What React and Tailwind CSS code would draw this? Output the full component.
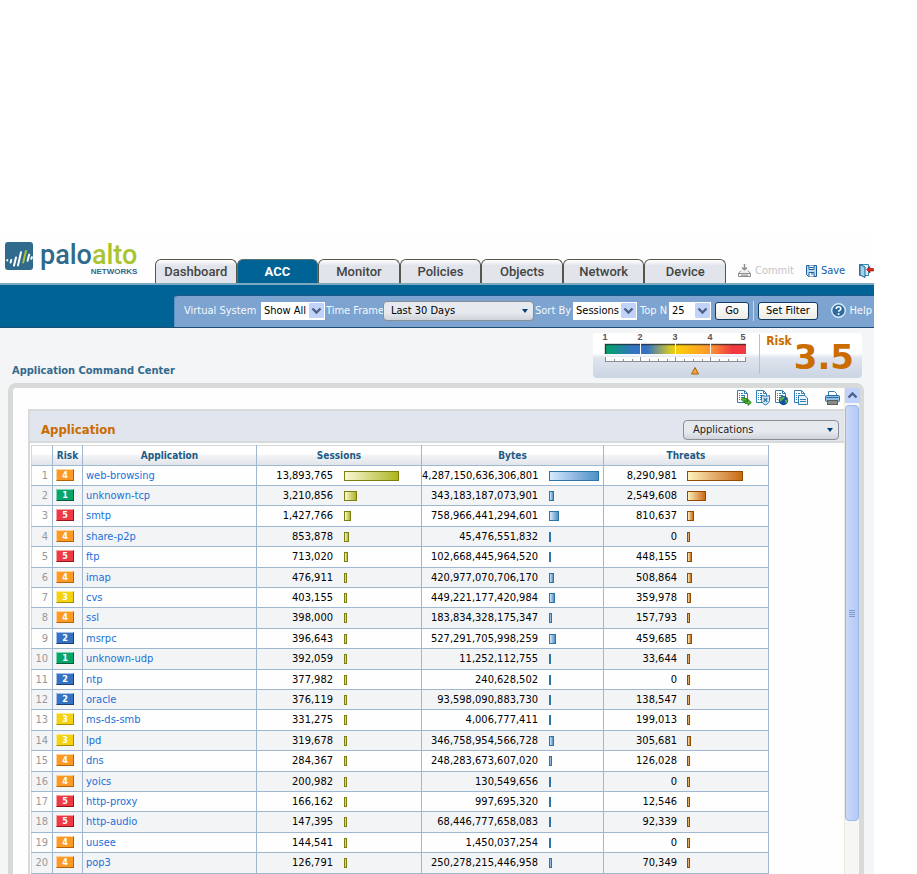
import React, { useState } from 'react';

const TABS = ['Dashboard', 'ACC', 'Monitor', 'Policies', 'Objects', 'Network', 'Device'];

// [risk, name, sessions, bar, bytes, bar, threats, bar]
const ROWS = [
  [4, 'web-browsing', '13,893,765', 55, '4,287,150,636,306,801', 50, '8,290,981', 56],
  [1, 'unknown-tcp', '3,210,856', 13, '343,183,187,073,901', 5, '2,549,608', 19],
  [5, 'smtp', '1,427,766', 7, '758,966,441,294,601', 10, '810,637', 7],
  [4, 'share-p2p', '853,878', 5, '45,476,551,832', 2, '0', 3],
  [5, 'ftp', '713,020', 4, '102,668,445,964,520', 2, '448,155', 5],
  [4, 'imap', '476,911', 3, '420,977,070,706,170', 5, '508,864', 5],
  [3, 'cvs', '403,155', 3, '449,221,177,420,984', 6, '359,978', 4],
  [4, 'ssl', '398,000', 3, '183,834,328,175,347', 3, '157,793', 3],
  [2, 'msrpc', '396,643', 3, '527,291,705,998,259', 7, '459,685', 5],
  [1, 'unknown-udp', '392,059', 3, '11,252,112,755', 2, '33,644', 3],
  [2, 'ntp', '377,982', 3, '240,628,502', 2, '0', 3],
  [2, 'oracle', '376,119', 3, '93,598,090,883,730', 2, '138,547', 3],
  [3, 'ms-ds-smb', '331,275', 3, '4,006,777,411', 2, '199,013', 3],
  [3, 'lpd', '319,678', 3, '346,758,954,566,728', 5, '305,681', 4],
  [4, 'dns', '284,367', 3, '248,283,673,607,020', 3, '126,028', 3],
  [4, 'yoics', '200,982', 3, '130,549,656', 2, '0', 3],
  [5, 'http-proxy', '166,162', 3, '997,695,320', 2, '12,546', 3],
  [5, 'http-audio', '147,395', 3, '68,446,777,658,083', 2, '92,339', 3],
  [4, 'uusee', '144,541', 3, '1,450,037,254', 2, '0', 3],
  [4, 'pop3', '126,791', 3, '250,278,215,446,958', 3, '70,349', 3],
];

const RISK_STYLES = {
  1: 'bg-[#08a56b] border-t-[#7fd6b4] border-l-[#7fd6b4] border-b-[#045c3c] border-r-[#045c3c]',
  2: 'bg-[#3672c4] border-t-[#a3c0ea] border-l-[#a3c0ea] border-b-[#1b3f78] border-r-[#1b3f78]',
  3: 'bg-[#f5d20e] border-t-[#fbeb94] border-l-[#fbeb94] border-b-[#a58c05] border-r-[#a58c05]',
  4: 'bg-[#fd9a26] border-t-[#fed29c] border-l-[#fed29c] border-b-[#b36408] border-r-[#b36408]',
  5: 'bg-[#ee3a43] border-t-[#f8a3a7] border-l-[#f8a3a7] border-b-[#98141c] border-r-[#98141c]',
};

const BAR_STYLES = {
  sessions: 'border-[#7d8010] from-[#fbf6d0] via-[#d3d77c] to-[#adb500]',
  bytes: 'border-[#2d75a6] from-[#d5ebfd] via-[#93b9e2] to-[#4a92c4]',
  threats: 'border-[#8f4c02] from-[#fbf3bd] via-[#e3ab6c] to-[#c96a00]',
};

const Logo = () => (
  <div className="flex h-8 items-start gap-[7px]">
    <svg width="28" height="28" viewBox="0 0 28 28" className="shrink-0" aria-hidden="true">
      <rect width="28" height="28" rx="3" fill="#306a8c" />
      <g stroke="#fff" strokeWidth="2" strokeLinecap="round">
        <path d="M2.2 18.4l.1-.3M5.6 20.6l.7-2.6M9 23.6l2-8.2M13 23.4l3-13.2" />
        <path d="M18.2 20.5l2.8-11.6" stroke="#a9c42f" />
        <path d="M22.6 18.8l1.6-6.2M26.4 16.8l.4-1.6" />
      </g>
    </svg>
    <div className="flex flex-col items-end">
      <span className="font-['Roboto',sans-serif] text-[27px] leading-[26px] font-medium text-[#306a8c]">
        palo<span className="text-[#a9c42f]">alto</span>
      </span>
      <span className="font-['Liberation_Sans',sans-serif] text-[8px] leading-[8px] font-bold text-[#306a8c]">NETWORKS</span>
    </div>
  </div>
);

const Chevron = ({ up }) => (
  <svg width="15" height="15" viewBox="0 0 15 15" aria-hidden="true">
    <rect width="15" height="15" rx="1" fill="#c2d3fb" />
    <path d={up ? 'M3.5 9.5l4-4 4 4' : 'M3.5 5.5l4 4 4-4'} fill="none" stroke="#4d6185" strokeWidth="2.4" />
  </svg>
);

const XpSelect = ({ id, options, className }) => (
  <span className={`relative flex h-[18px] bg-white ${className}`}>
    <select id={id} className="w-full appearance-none bg-transparent pl-[3px] text-black outline-none">
      {options.map((option) => (
        <option key={option}>{option}</option>
      ))}
    </select>
    <span className="pointer-events-none absolute top-px right-px">
      <Chevron />
    </span>
  </span>
);

const FlatSelect = ({ label, id, options, className }) => (
  <span
    className={`relative flex h-5 rounded-sm border border-[#8a8f96] bg-gradient-to-b from-[#e6e9ee] from-60% to-[#d0d4da] ${className}`}
  >
    <select id={id} aria-label={label} className="w-full appearance-none bg-transparent outline-none">
      {options.map((option) => (
        <option key={option}>{option}</option>
      ))}
    </select>
    <svg width="6" height="4" viewBox="0 0 6 4" className="pointer-events-none absolute top-[7px] right-[5px]">
      <path d="M0 0h6L3 4z" fill="#003f73" />
    </svg>
  </span>
);

const XpButton = ({ children, className }) => (
  <button
    type="button"
    className={`h-[18px] rounded-[3px] border border-[#123c66] bg-gradient-to-b from-white to-[#ecebe4] leading-4 text-black ${className}`}
  >
    {children}
  </button>
);

const Sheet = () => (
  <>
    <path d="M1.5.5h7l3 3v9h-10z" fill="#fff" stroke="#2f7fb5" />
    <path d="M8.5.5v3h3" fill="none" stroke="#2f7fb5" />
    <path d="M3 3.5h1m1 0h2M3 5.5h1m1 0h4M3 7.5h1m1 0h4M3 9.5h1m1 0h3" stroke="#2f7fb5" />
  </>
);

const ToolButton = ({ label, children }) => (
  <button type="button" aria-label={label} className="h-4 w-4">
    <svg width="16" height="16" viewBox="0 0 16 16">{children}</svg>
  </button>
);

const Toolbar = () => (
  <div className="flex h-[21px] items-center justify-end pr-1 pb-0.5">
    <div className="flex gap-[3px]">
      <ToolButton label="Export traffic">
        <Sheet />
        <path d="M5 9.500l3.500-3v2h2.500v2H8.500v2z" fill="#52b82c" stroke="#1c7a17" strokeWidth=".8" />
        <path d="M15.300 12.500l-3.300-3v2H9v2h3v2z" fill="#52b82c" stroke="#1c7a17" strokeWidth=".8" />
      </ToolButton>
      <ToolButton label="Threat log">
        <Sheet />
        <path d="M6.500 5.500l4 .8 4-.8v5c0 2-2 3.500-4 4.500-2-1-4-2.500-4-4.500z" fill="#d4e7f6" stroke="#3177a8" />
        <path d="M8.700 8.200l3.600 3.600m0-3.600l-3.600 3.600" stroke="#3177a8" strokeWidth="1.300" />
      </ToolButton>
      <ToolButton label="URL log">
        <Sheet />
        <circle cx="9.500" cy="10.500" r="4.700" fill="#174f9c" />
        <path d="M6 8.500c2-2 4-2 5-1.500l-1 2-2 1-1 2c-1-.5-1.500-2-1-3.500zM11 10l2.500-.5c.4 1.500-.5 3.500-2 4z" fill="#5cb544" />
      </ToolButton>
      <ToolButton label="Data log">
        <Sheet />
        <path d="M5.500 5.500h6l3 2.500v6.500h-9z" fill="#e9f4fc" stroke="#2f7fb5" />
        <path d="M7 9.500h6M7 11.500h6" stroke="#2f7fb5" />
      </ToolButton>
    </div>
    <button type="button" aria-label="Print" className="ml-4">
      <svg width="15" height="15" viewBox="0 0 15 15">
        <path d="M3.500 5.500v-4h6l2 2v2" fill="#fff" stroke="#2f7fb5" />
        <rect x=".5" y="5.500" width="14" height="6" rx="1" fill="#8fbfe2" stroke="#2a6b9c" />
        <path d="M1.500 7.500h12" stroke="#2a6b9c" />
        <rect x="2.500" y="10.500" width="10" height="4" fill="#8b8b88" stroke="#5c5c5a" />
      </svg>
    </button>
  </div>
);

const RiskGauge = () => (
  <div className="mr-3 flex h-[45px] rounded bg-gradient-to-b from-white from-45% via-[#e0e5ee] via-55% to-[#cbd4e3] pl-2">
    <svg width="150" height="45" viewBox="0 0 150 45" role="img" aria-label="Risk 3.5 of 5">
      <defs>
        <linearGradient id="risk-ramp">
          <stop offset="0" stopColor="#00a566" />
          <stop offset=".2" stopColor="#3573c2" />
          <stop offset=".3" stopColor="#3573c2" />
          <stop offset=".46" stopColor="#d2c62a" />
          <stop offset=".52" stopColor="#fbcd08" />
          <stop offset=".75" stopColor="#fd9430" />
          <stop offset=".9" stopColor="#f03a40" />
          <stop offset="1" stopColor="#f03a40" />
        </linearGradient>
      </defs>
      <g fontFamily="Liberation Sans, sans-serif" fontSize="9" fontWeight="bold" fill="#555" textAnchor="middle">
        <text x="4" y="7">1</text>
        <text x="39" y="7">2</text>
        <text x="74" y="7">3</text>
        <text x="109" y="7">4</text>
        <text x="142" y="7">5</text>
      </g>
      <rect x="4" y="11" width="141" height="10" fill="url(#risk-ramp)" />
      <path d="M4.500 21v-9.500H145" fill="none" stroke="#222" strokeWidth="1.500" strokeOpacity=".7" />
      <path d="M39.500 10v12M74.500 10v12M109.500 10v12" stroke="#fff" />
      <path d="M4 26h141" stroke="#fff" strokeWidth="4" />
      <path
        d="M4.500 24v4M13.500 26v2M22.500 26v2M31.500 26v2M39.500 24v4M48.500 26v2M57.500 26v2M66.500 26v2M74.500 24v4M83.500 26v2M92.500 26v2M101.500 26v2M109.500 24v4M118.500 26v2M127.500 26v2M136.500 26v2M144.500 24v4M4 28.500h141"
        stroke="#8b8f94"
      />
      <path d="M94 34.500l3.500 6.500h-7z" fill="#f8a52c" stroke="#a85f10" />
    </svg>
    <div className="ml-2 mt-px flex h-10 items-start gap-0.5 border-l border-[#a9c4dc] pr-2 pl-1.5 font-bold text-[#ca6c00]">
      <span className="text-[12px] leading-[14px]">Risk</span>
      <span className="mt-[7px] font-['DejaVu_Sans',sans-serif] text-[34px] leading-8">3.5</span>
    </div>
  </div>
);

const Bar = ({ kind, width }) => (
  <span className={`block h-[10px] border bg-gradient-to-r ${BAR_STYLES[kind]}`} style={{ width }} />
);

const MeterCell = ({ value, kind, width, barArea }) => (
  <td className="border border-[#a0b8cf] p-0">
    <div className="flex items-center">
      <span className="flex-1 text-right whitespace-nowrap text-black">{value}</span>
      <span className={`shrink-0 ${barArea}`}>
        <Bar kind={kind} width={width} />
      </span>
    </div>
  </td>
);

const AppTable = () => (
  <table className="ml-px mt-0.5 w-[737px] table-fixed border-collapse border border-[#a0b8cf] text-[11px] leading-[14px]">
    <colgroup>
      <col className="w-[21px]" />
      <col className="w-[30px]" />
      <col className="w-[174px]" />
      <col className="w-[165px]" />
      <col className="w-[182px]" />
      <col className="w-[165px]" />
    </colgroup>
    <thead>
      <tr className="h-5 bg-gradient-to-b from-white from-40% via-[#f1f2f4] via-50% to-[#dfe4ea] text-[10px] text-[#1d5a85]">
        {['', 'Risk', 'Application', 'Sessions', 'Bytes', 'Threats'].map((title) => (
          <th
            key={title}
            className="border border-[#a0b8cf] border-t-[#d6d8da] p-0 text-center font-bold first:border-l-[#d6d8da]"
          >
            {title}
          </th>
        ))}
      </tr>
    </thead>
    <tbody>
      {ROWS.map(([risk, name, sessions, sBar, bytes, bBar, threats, tBar], index) => (
        <tr key={name} className="h-5 even:bg-[#f3f4f6] nth-[5n]:h-[21px] nth-[5n+3]:h-[21px]">
          <td className="border border-[#a0b8cf] border-l-[#d6d8da] p-0 pr-1 text-right text-[#999]">{index + 1}</td>
          <td className="border border-[#a0b8cf] p-0 pb-0.5 pl-[3px]">
            <span
              className={`block h-3 w-[18px] border text-center text-[9px] leading-[10px] font-bold text-white ${RISK_STYLES[risk]}`}
            >
              {risk}
            </span>
          </td>
          <td className="border border-[#a0b8cf] p-0 pl-[3px]">
            <a href="#" className="text-[#1a70d8]">{name}</a>
          </td>
          <MeterCell value={sessions} kind="sessions" width={sBar} barArea="w-[77px] ml-[11px]" />
          <MeterCell value={bytes} kind="bytes" width={bBar} barArea="w-[54px] ml-[11px]" />
          <MeterCell value={threats} kind="threats" width={tBar} barArea="w-[81px] ml-[10px]" />
        </tr>
      ))}
    </tbody>
  </table>
);

const App = () => {
  const [active, setActive] = useState('ACC');

  return (
    <div className="flex h-screen flex-col overflow-hidden bg-white pt-[233px] pr-[43px] font-['DejaVu_Sans_Condensed','DejaVu_Sans',sans-serif] text-[11px] leading-[14px]">
      <header className="flex shrink-0 items-end bg-[#fefefe]">
        <div className="w-[155px] shrink-0 self-start pt-[9px] pl-[5px]">
          <Logo />
        </div>
        <nav className="flex w-[571px] shrink-0 items-end pt-[26px]">
          {TABS.map((tab) => (
            <button
              key={tab}
              type="button"
              onClick={() => setActive(tab)}
              className={
                tab === active
                  ? "h-6 flex-1 rounded-t-md border border-b-0 border-[#58706f] bg-[#006396] font-['Roboto',sans-serif] text-[13px] font-bold text-white"
                  : "h-6 flex-1 rounded-t-md border border-b-0 border-[#55564a] bg-gradient-to-b from-white to-[#e1e5eb] to-25% font-['Roboto',sans-serif] text-[13px] font-medium text-[#444]"
              }
            >
              {tab}
            </button>
          ))}
        </nav>
        <div className="flex h-6 min-w-0 flex-1 items-center pb-px pl-3">
          <button type="button" disabled className="flex items-center gap-1 text-[#c4c4c4]">
            <svg width="13" height="14" viewBox="0 0 13 14">
              <path d="M6.500 0v5M4 3.500l2.500 2.500L9 3.500" fill="none" stroke="#8d8d8d" strokeWidth="1.500" />
              <path d="M3 6.500L.5 9.500v3h12v-3L10 6.500" fill="#eee" stroke="#8d8d8d" />
              <path d="M.5 9.500h12M3 11.200h7" stroke="#8d8d8d" />
            </svg>
            Commit
          </button>
          <button type="button" className="ml-3 flex items-center gap-1 text-[#0d5cb0]">
            <svg width="11" height="12" viewBox="0 0 11 12">
              <path d="M.5.5h10v11h-8l-2-2z" fill="#b9dcf3" stroke="#1d5f9c" />
              <path d="M3 .5v4h5v-4M3 11.500v-4h5v4M3.500 2.500h4M5 9h2" fill="#fff" stroke="#1d5f9c" />
            </svg>
            Save
          </button>
          <button type="button" aria-label="Log out" className="ml-auto">
            <svg width="15" height="15" viewBox="0 0 15 15">
              <path d="M.5 1.500h9v11h-9z" fill="#d9effa" stroke="#2c87b5" />
              <path d="M1 1.500l5 2.500v10.500l-5-2.500z" fill="#9fd3ec" stroke="#1e5f8a" />
              <path d="M7.500 6.500l3.500-3v2h3.500v2.500H11v2z" fill="#e0261b" stroke="#8d0d08" strokeWidth=".6" />
            </svg>
          </button>
        </div>
      </header>

      <div className="shrink-0 border-t-2 border-t-[#7ba9bf] border-b border-b-[#1c4e74] bg-[#006396] pt-[10px] pl-[174px]">
        <div className="flex h-8 items-center rounded-tl border-t border-l border-t-[#1c5a8c] border-l-[#5f92c2] bg-[#7da4d0] pb-0.5 pl-[9px] whitespace-nowrap text-[#f4f8fc]">
          <label htmlFor="vsys" className="w-[77px] shrink-0">Virtual System</label>
          <XpSelect id="vsys" options={['Show All']} className="w-16 shrink-0" />
          <label htmlFor="frame" className="w-[58px] shrink-0 pl-px">Time Frame</label>
          <FlatSelect id="frame" options={['Last 30 Days']} className="w-[151px] shrink-0 pl-[7px] text-black" />
          <label htmlFor="sort" className="w-[39px] shrink-0 pl-px">Sort By</label>
          <XpSelect id="sort" options={['Sessions']} className="w-16 shrink-0" />
          <label htmlFor="top" className="w-8 shrink-0 pl-[3px]">Top N</label>
          <XpSelect id="top" options={['25']} className="w-[42px] shrink-0" />
          <XpButton className="ml-1 w-[34px] shrink-0">Go</XpButton>
          <span className="ml-1 h-5 w-px bg-[#c5d7eb]" />
          <XpButton className="ml-1 w-[60px] shrink-0">Set Filter</XpButton>
          <a href="#" className="ml-auto flex items-center gap-[3px] pr-0.5">
            <svg width="15" height="15" viewBox="0 0 15 15" aria-hidden="true">
              <circle cx="7.500" cy="7.500" r="6.800" fill="#2c6c9f" stroke="#dcebf7" strokeWidth="1.400" />
              <path d="M5.200 6c0-3 4.600-3 4.600-.3 0 1.600-2.200 1.600-2.200 3.100" fill="none" stroke="#fff" strokeWidth="1.600" />
              <circle cx="7.600" cy="11" r="1" fill="#fff" />
            </svg>
            Help
          </a>
        </div>
      </div>

      <main className="flex min-h-0 flex-1 flex-col bg-[#f4f5f7] pt-[5px]">
        <div className="flex shrink-0 items-end justify-between">
          <h1 className="pl-3 text-[11px] font-bold text-[#33698c]">Application Command Center</h1>
          <RiskGauge />
        </div>

        <div className="mt-[5px] mr-[10px] ml-2 flex min-h-0 flex-1 rounded-t-lg border-5 border-b-0 border-[#d8dad9] bg-[#fefefe]">
          <section className="min-w-0 flex-1 overflow-hidden">
            <Toolbar />
            <div className="ml-[15px] border-t-2 border-l-2 border-[#d8dad9]">
              <div className="flex h-8 items-center justify-between border-b-2 border-[#d8dad9] bg-[#e1e5ed] pr-[5px] pl-[11px]">
                <h2 className="pt-2 text-[13px] leading-4 font-bold text-[#ca6c00]">Application</h2>
                <span className="pt-2">
                  <FlatSelect
                    id="view"
                    label="Application view"
                    options={['Applications']}
                    className="w-[156px] pl-[9px] text-[#222]"
                  />
                </span>
              </div>
              <AppTable />
            </div>
          </section>

          <aside className="flex w-[15px] shrink-0 flex-col border-l border-[#eceada] bg-[#f6f6f4]">
            <button type="button" aria-label="Scroll up" className="mb-0.5">
              <Chevron up />
            </button>
            <div className="flex h-[416px] shrink-0 flex-col items-center justify-center gap-px rounded-sm border border-[#9db9e6] bg-gradient-to-r from-[#cbd8f8] to-[#b4c9f6]">
              <span className="h-px w-1.5 bg-[#7c9bd0]" />
              <span className="h-px w-1.5 bg-[#7c9bd0]" />
              <span className="h-px w-1.5 bg-[#7c9bd0]" />
              <span className="h-px w-1.5 bg-[#7c9bd0]" />
            </div>
          </aside>
        </div>
      </main>
    </div>
  );
};

export default App;
